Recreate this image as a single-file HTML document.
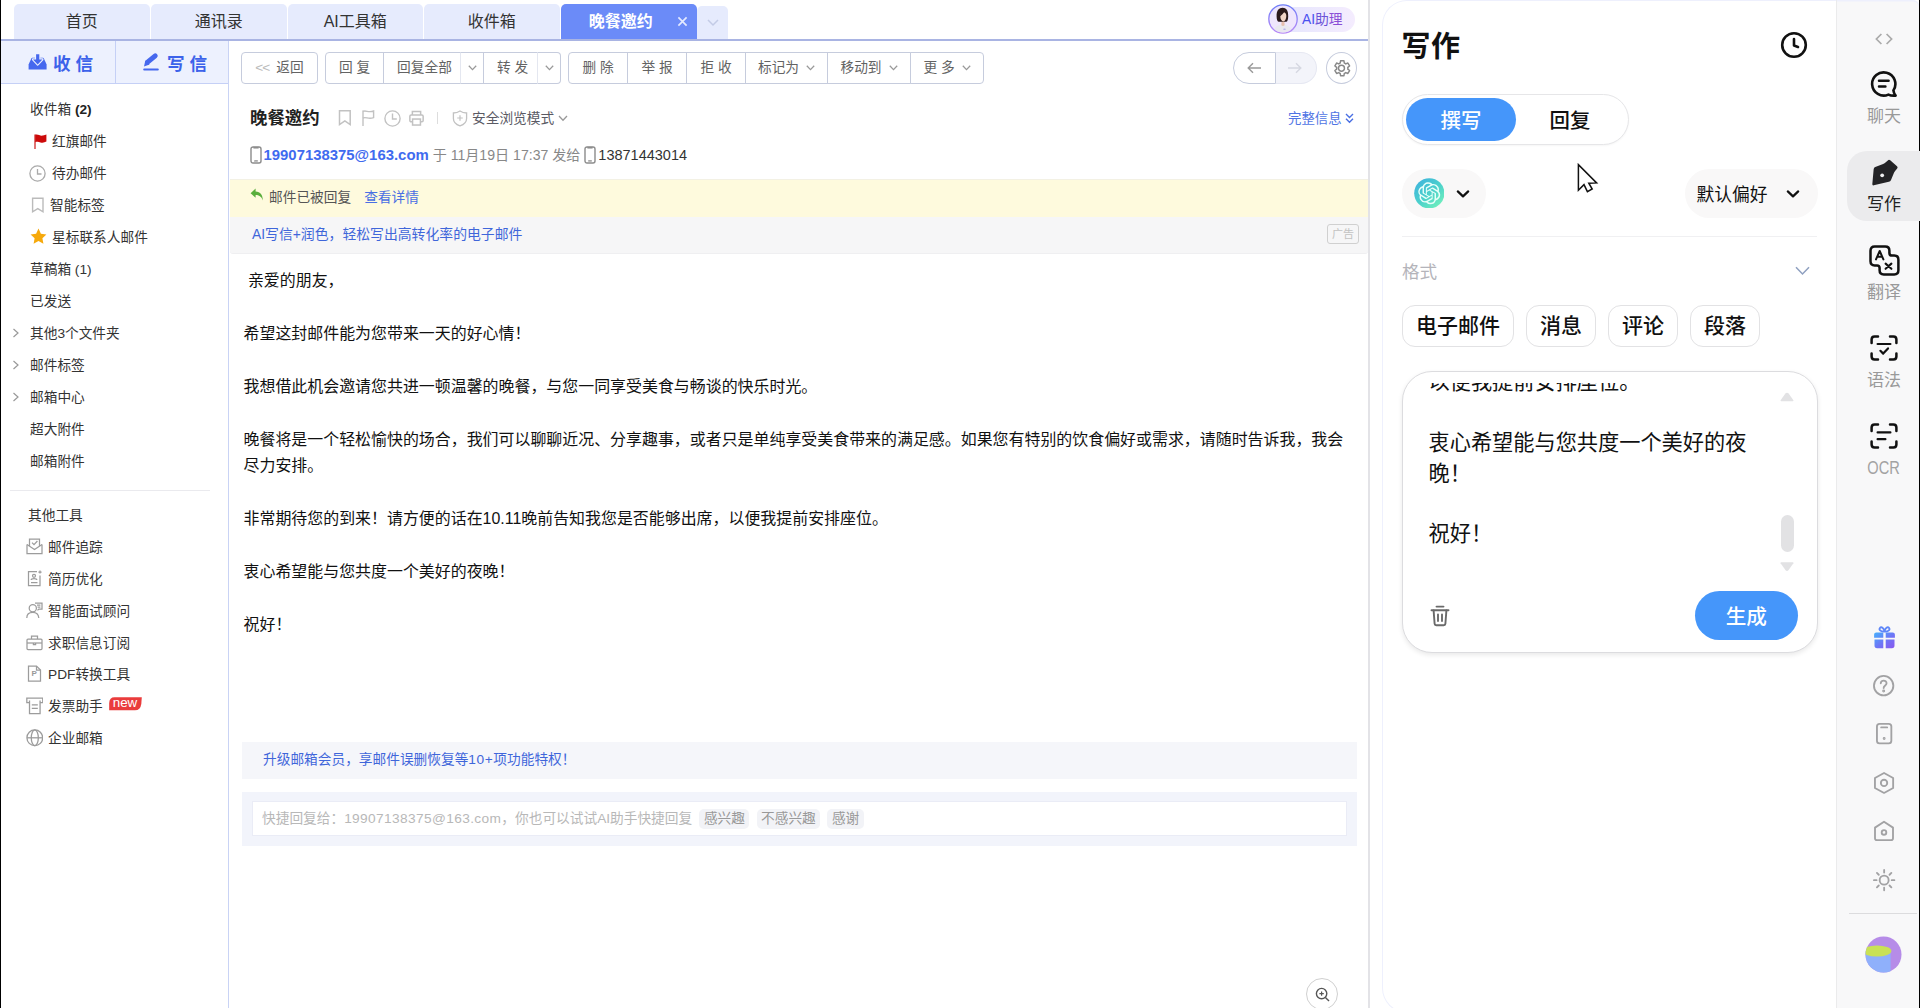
<!DOCTYPE html>
<html lang="zh-CN">
<head>
<meta charset="utf-8">
<title>晚餐邀约</title>
<style>
*{box-sizing:border-box;margin:0;padding:0}
html,body{width:1920px;height:1008px;overflow:hidden;background:#fff}
body{font-family:"Liberation Sans","Noto Sans CJK SC",sans-serif;font-size:13.7px;color:#333;position:relative}
.abs{position:absolute}
#edge{left:0;top:0;width:1px;height:1008px;background:#000}
/* tabs */
.tab{position:absolute;top:4px;height:35px;width:135.5px;background:#e6ebfd;border-radius:5px 5px 0 0;text-align:center;line-height:35px;font-size:16px;color:#333}
.tab.on{background:#6b8bf8;color:#fff;font-weight:bold;line-height:36px}
#tabline{left:1px;top:39px;width:1368px;height:2px;background:#a9b4e3}
/* sidebar */
#side{left:1px;top:41px;width:228px;height:967px;border-right:1px solid #c9d3f5;background:#fff}
#sbtn{left:0;top:0;width:227px;height:43px;background:#edf1fe;border-bottom:1px solid #c5d0f6}
.sb{position:absolute;top:0;height:42px;line-height:46px;font-size:17.6px;font-weight:bold;color:#3c62ea;white-space:nowrap}
.mi{position:absolute;left:0;height:20px;line-height:22px;white-space:nowrap;color:#333}
.mi svg{position:absolute}
/* main */
#main{left:230px;top:41px;width:1138px;height:967px;background:#fff}
.btn{position:absolute;top:11px;height:32px;border:1px solid #c6ccdd;background:#fff;color:#636363;text-align:center;line-height:30px;white-space:nowrap}

#vline{left:1368.4px;top:0;width:1.7px;height:1008px;background:#e3e3e7}
#panel{left:1382px;top:0;width:455px;height:1013px;border:1.6px solid #eef0fd;border-right:none;border-radius:25px 0 0 25px;background:#fff}
#rail{left:1836px;top:0;width:82.7px;height:1013px;background:#f8f8f9;border-left:1px solid #ebebec;box-shadow:inset 0 1.6px 0 #eef0fd;border-radius:0 6px 0 0}
#redge{left:1918.7px;top:0;width:1.3px;height:1008px;background:#000}
.rl{position:absolute;left:0;width:94px;text-align:center;font-size:17px;color:#999;height:24px;line-height:24px}
.chip{position:absolute;top:304.5px;height:42.5px;border:1px solid #e2e2e4;border-radius:13px;font-size:21px;font-weight:500;color:#111;text-align:center;line-height:39.6px;background:#fff}
</style>
</head>
<body>
<div id="edge" class="abs"></div>

<!-- TABS -->
<div class="tab" style="left:14px">首页</div>
<div class="tab" style="left:151px">通讯录</div>
<div class="tab" style="left:287.5px">AI工具箱</div>
<div class="tab" style="left:424px">收件箱</div>
<div class="tab on" style="left:561px"><span style="position:relative;left:-8px">晚餐邀约</span>
  <svg class="abs" style="left:116px;top:12px" width="11" height="11" viewBox="0 0 11 11"><path d="M1.4 1.4 L9.6 9.6 M9.6 1.4 L1.4 9.6" stroke="#e4eaff" stroke-width="1.7" fill="none"/></svg>
</div>
<div class="abs" style="left:697.3px;top:6px;width:31px;height:33px;background:#e6ebfd;border-radius:5px 5px 0 0">
  <svg class="abs" style="left:9.5px;top:13px" width="12" height="8" viewBox="0 0 12 8"><path d="M1 1 L6 6 L11 1" stroke="#c3cbe6" stroke-width="1.5" fill="none"/></svg>
</div>

<!-- AI assistant pill -->
<div class="abs" style="left:1283px;top:7px;width:72px;height:25px;border-radius:0 13px 13px 0;background:linear-gradient(90deg,#e6e6fd,#f4ecfe)"></div>
<div class="abs" style="left:1302px;top:7px;height:25px;line-height:25px;font-size:13.8px;color:#6a4fe0;white-space:nowrap"><span style="color:#4a50f0">AI</span><span style="color:#6b52d8">助</span><span style="color:#8a4fd6">理</span></div>
<svg class="abs" style="left:1268px;top:4px" width="30" height="30" viewBox="0 0 30 30">
  <defs><linearGradient id="avg" x1="0" y1="0" x2="0" y2="1"><stop offset="0" stop-color="#6c7cf8"/><stop offset="1" stop-color="#b98af6"/></linearGradient>
  <clipPath id="avc"><circle cx="15" cy="15" r="13.6"/></clipPath></defs>
  <circle cx="15" cy="15" r="14.2" fill="#efe6fc" stroke="url(#avg)" stroke-width="1.3"/>
  <g clip-path="url(#avc)">
    <path d="M5.6 30 C5.8 22.6 9.6 20.6 14.8 20.6 C20 20.6 23.2 22.6 23.6 30 Z" fill="#e9e8ef"/>
    <path d="M13.6 16.5 L16.4 16.5 L16.6 21.2 Q15 22.6 13.4 21.2 Z" fill="#e6bfae"/>
    <path d="M8.6 12.4 C8.4 6.4 11 3.7 14.6 3.7 C18.2 3.7 20.4 6.4 20.2 12.4 C20.1 15.4 19.6 17 18.4 17.8 L10.6 17.8 C9.2 17 8.7 15.4 8.6 12.4 Z" fill="#2b1a1b"/>
    <path d="M12.3 11 C12.8 9 14.4 8.2 15.6 8.2 C17 8.2 18.3 9.4 18.3 12 C18.3 15 17 17.4 15.3 17.4 C13.6 17.4 12.3 15 12.3 12.6 Z" fill="#f0d3c6"/>
    <path d="M11.8 12.4 C12 9.4 13.6 7.4 16.4 7.6 C15.6 9.4 14 10.8 11.8 12.4 Z" fill="#2b1a1b"/>
    <rect x="15.4" y="24.4" width="2.2" height="1.5" rx="0.5" fill="#b9b4ee"/>
  </g>
</svg>
<div id="tabline" class="abs"></div>

<div id="side" class="abs">
<div id="sbtn" class="abs"><div class="abs" style="left:114px;top:0;width:1px;height:42px;background:#c5d0f6"></div><svg class="abs" style="left:26.5px;top:11px" width="20" height="19" viewBox="0 0 20 19"><path d="M0.6 17.4 L0.6 12.4 L3.4 6.2 Q3.6 5.8 4.2 5.8 L15 5.8 Q15.6 5.8 15.8 6.2 L18.6 12.4 L18.6 17.4 Z" fill="#4668ee"/><path d="M8.1 2.2 L11.3 2.2 L11.3 7.4 L14.4 7.4 L9.7 12.6 L5 7.4 L8.1 7.4 Z" fill="#4668ee" stroke="#edf1fe" stroke-width="2.2" stroke-linejoin="round"/><path d="M8.1 2.2 L11.3 2.2 L11.3 7.4 L14.4 7.4 L9.7 12.6 L5 7.4 L8.1 7.4 Z" fill="#4668ee"/></svg><div class="sb" style="left:52px">收 信</div><svg class="abs" style="left:141px;top:11px" width="19" height="20" viewBox="0 0 19 20"><path d="M5.6 10.2 L13.2 3.8" stroke="#4668ee" stroke-width="5" stroke-linecap="round" fill="none"/><path d="M2 14.4 L3.4 8.2 L7.6 12.4 Z" fill="#4668ee"/><rect x="1.2" y="16.5" width="15.6" height="2" rx="1" fill="#4668ee"/></svg><div class="sb" style="left:166px">写 信</div></div>
<div class="mi" style="top:58px;left:29px">收件箱 <b style="color:#222">(2)</b></div>
<div class="mi" style="top:90px;left:51px"><svg style="left:-18px;top:3px" width="13" height="15" viewBox="0 0 13 15"><path d="M1 0.6 L1 15" stroke="#d23a3a" stroke-width="1.4"/><path d="M1.2 0.8 C4 -0.2 6 2.4 9 1.6 C10.5 1.2 11.5 0.8 12.4 0.4 L12.4 7.6 C10.5 8.6 8.5 9.2 6.5 8.4 C4.5 7.6 3 7.4 1.2 8.2 Z" fill="#cc0a0a"/></svg>红旗邮件</div>
<div class="mi" style="top:122px;left:51px"><svg style="left:-23px;top:2px" width="17" height="17" viewBox="0 0 17 17"><circle cx="8.5" cy="8.5" r="7.6" fill="none" stroke="#aaa" stroke-width="1.3"/><path d="M8.5 4 L8.5 9 L12.5 9" fill="none" stroke="#aaa" stroke-width="1.3"/></svg>待办邮件</div>
<div class="mi" style="top:154px;left:49px"><svg style="left:-19px;top:2px" width="14" height="17" viewBox="0 0 14 17"><path d="M1.6 1.2 L12 1.2 L12 14.8 L6.8 11.6 L1.6 14.8 Z" fill="none" stroke="#bbb" stroke-width="1.4"/></svg>智能标签</div>
<div class="mi" style="top:186px;left:51px"><svg style="left:-22px;top:1px" width="17" height="17" viewBox="0 0 17 17"><path d="M8.5 0.6 L10.9 5.7 L16.4 6.4 L12.4 10.2 L13.4 15.8 L8.5 13.1 L3.6 15.8 L4.6 10.2 L0.6 6.4 L6.1 5.7 Z" fill="#f6a90c"/></svg>星标联系人邮件</div>
<div class="mi" style="top:218px;left:29px">草稿箱 (1)</div>
<div class="mi" style="top:250px;left:29px">已发送</div>
<div class="mi" style="top:282px;left:29px"><svg style="left:-18px;top:5px" width="8" height="10" viewBox="0 0 8 10"><path d="M1.5 1 L6 5 L1.5 9" fill="none" stroke="#999" stroke-width="1.2"/></svg>其他3个文件夹</div>
<div class="mi" style="top:314px;left:29px"><svg style="left:-18px;top:5px" width="8" height="10" viewBox="0 0 8 10"><path d="M1.5 1 L6 5 L1.5 9" fill="none" stroke="#999" stroke-width="1.2"/></svg>邮件标签</div>
<div class="mi" style="top:346px;left:29px"><svg style="left:-18px;top:5px" width="8" height="10" viewBox="0 0 8 10"><path d="M1.5 1 L6 5 L1.5 9" fill="none" stroke="#999" stroke-width="1.2"/></svg>邮箱中心</div>
<div class="mi" style="top:378px;left:29px">超大附件</div>
<div class="mi" style="top:410px;left:29px">邮箱附件</div>
<div class="abs" style="left:9px;top:449px;width:200px;height:1px;background:#eaeaee"></div>
<div class="mi" style="top:464px;left:27px">其他工具</div>
<div class="mi" style="top:496.00px;left:47px"><svg style="left:-22px;top:1px" width="17" height="17" viewBox="0 0 17 17" fill="none" stroke="#9c9c9c" stroke-width="1.25"><path d="M1 6.5 L1 15.5 L16 15.5 L16 6.5"/><path d="M1 6.5 L8.5 11.5 L16 6.5"/><path d="M3.5 8 L3.5 1 L13.5 1 L13.5 8"/><path d="M6 4.6 L8 6.6 L11.4 3"/></svg>邮件追踪</div>
<div class="mi" style="top:527.85px;left:47px"><svg style="left:-22px;top:1px" width="17" height="17" viewBox="0 0 17 17" fill="none" stroke="#9c9c9c" stroke-width="1.25"><path d="M11 1.5 L2.5 1.5 L2.5 15.5 L14 15.5 L14 5.5"/><circle cx="8" cy="5.8" r="1.5"/><path d="M5.2 10 C5.2 8.2 10.8 8.2 10.8 10"/><path d="M5 12.6 L11.5 12.6"/><path d="M14 0.4 L14 3.6 M12.4 2 L15.6 2"/></svg>简历优化</div>
<div class="mi" style="top:559.70px;left:47px"><svg style="left:-22px;top:1px" width="17" height="17" viewBox="0 0 17 17" fill="none" stroke="#9c9c9c" stroke-width="1.25"><circle cx="6.8" cy="6.2" r="3.6"/><path d="M0.8 16 C0.8 11.5 4 10.4 6.8 10.4 C9.6 10.4 12.4 11.5 12.8 16"/><path d="M9 1.2 L16 1.2 L16 7 L12.8 7 L11.5 8.4"/><path d="M11 3.2 L14.4 3.2 M11.6 5 L14.4 5"/></svg>智能面试顾问</div>
<div class="mi" style="top:591.55px;left:47px"><svg style="left:-22px;top:1px" width="17" height="17" viewBox="0 0 17 17" fill="none" stroke="#9c9c9c" stroke-width="1.25"><rect x="1" y="5" width="15" height="10.5" rx="1"/><path d="M5.5 5 L5.5 2 L11.5 2 L11.5 5"/><path d="M1 9 L16 9"/><path d="M7.4 9 L7.4 10.6 L9.6 10.6 L9.6 9"/></svg>求职信息订阅</div>
<div class="mi" style="top:623.40px;left:47px"><svg style="left:-22px;top:1px" width="17" height="17" viewBox="0 0 17 17" fill="none" stroke="#9c9c9c" stroke-width="1.25"><path d="M2.5 1 L10.5 1 L14.5 5 L14.5 16 L2.5 16 Z"/><path d="M10.5 1 L10.5 5 L14.5 5"/></svg><span style="position:absolute;left:-16.5px;top:2.6px;font-size:8px;font-weight:bold;color:#999;line-height:14px">P</span>PDF转换工具</div>
<div class="mi" style="top:655.10px;left:47px"><svg style="left:-22.3px;top:1.4px" width="17.6" height="17.6" viewBox="0 0 17 17" fill="none" stroke="#9c9c9c" stroke-width="1.25"><path d="M3.4 5.5 L0.8 5.5 L0.8 1 L16.2 1 L16.2 5.5 L13.6 5.5"/><path d="M3.4 3.5 L3.4 16 L13.6 16 L13.6 3.5"/><path d="M5.6 7.6 L11.4 7.6 M5.6 11 L11.4 11"/></svg>发票助手<svg style="left:61px;top:0.6px" width="33" height="14" viewBox="0 0 33 14"><path d="M5.5 0.2 L32.8 0.2 L32.3 7 Q31.4 13.3 26 13.3 L0.2 13.3 L0.2 6 Q0.4 0.2 5.5 0.2 Z" fill="#ea3c3c"/></svg><span style="position:absolute;left:61px;top:0.6px;width:32px;height:13.4px;color:#fff;font-size:13.4px;line-height:11.6px;text-align:center">new</span></div>
<div class="mi" style="top:687.00px;left:47px"><svg style="left:-22.3px;top:1.4px" width="17.6" height="17.6" viewBox="0 0 17 17" fill="none" stroke="#9c9c9c" stroke-width="1.25"><circle cx="8.5" cy="8.5" r="7.6"/><ellipse cx="8.5" cy="8.5" rx="3.4" ry="7.6"/><path d="M1 8.5 L16 8.5"/></svg>企业邮箱</div>
</div>
<div id="main" class="abs">
<div class="btn" style="left:11px;width:77px;border-radius:4px"><span style="color:#bbb;letter-spacing:-1px;margin-right:7px">&lt;&lt;</span>返回</div>
<div class="btn" style="left:95px;width:59px;border-radius:4px 0 0 4px">回 复</div>
<div class="btn" style="left:153px;width:78px;border-right-color:#e4e7f0"><span style="position:relative;left:2.5px">回复全部</span></div>
<div class="btn" style="left:230px;width:24px;border-left-color:#e4e7f0"><svg width="9" height="6" viewBox="0 0 9 6" style="vertical-align:1px"><path d="M0.8 0.8 L4.5 4.6 L8.2 0.8" fill="none" stroke="#999" stroke-width="1.3"/></svg></div>
<div class="btn" style="left:253px;width:55px;border-right-color:#e4e7f0"><span style="position:relative;left:2px">转 发</span></div>
<div class="btn" style="left:307px;width:24px;border-radius:0 4px 4px 0;border-left-color:#e4e7f0"><svg width="9" height="6" viewBox="0 0 9 6" style="vertical-align:1px"><path d="M0.8 0.8 L4.5 4.6 L8.2 0.8" fill="none" stroke="#999" stroke-width="1.3"/></svg></div>
<div class="btn" style="left:338px;width:60px;border-radius:4px 0 0 4px">删 除</div>
<div class="btn" style="left:397px;width:60px;">举 报</div>
<div class="btn" style="left:456px;width:60px;">拒 收</div>
<div class="btn" style="left:515px;width:83px;">标记为<svg width="9" height="6" viewBox="0 0 9 6" style="vertical-align:1px;margin-left:7px"><path d="M0.8 0.8 L4.5 4.6 L8.2 0.8" fill="none" stroke="#999" stroke-width="1.3"/></svg></div>
<div class="btn" style="left:597px;width:84px;">移动到<svg width="9" height="6" viewBox="0 0 9 6" style="vertical-align:1px;margin-left:7px"><path d="M0.8 0.8 L4.5 4.6 L8.2 0.8" fill="none" stroke="#999" stroke-width="1.3"/></svg></div>
<div class="btn" style="left:680px;width:74px;border-radius:0 4px 4px 0">更 多<svg width="9" height="6" viewBox="0 0 9 6" style="vertical-align:1px;margin-left:7px"><path d="M0.8 0.8 L4.5 4.6 L8.2 0.8" fill="none" stroke="#999" stroke-width="1.3"/></svg></div>
<div class="abs" style="left:1003px;top:11px;width:43px;height:32px;border:1px solid #c6ccdd;border-radius:16px 0 0 16px;background:#fff"><svg class="abs" style="left:13px;top:9px" width="15" height="12" viewBox="0 0 15 12"><path d="M14 6 L1.5 6 M6 1.2 L1.2 6 L6 10.8" fill="none" stroke="#999" stroke-width="1.4"/></svg></div>
<div class="abs" style="left:1045.5px;top:11px;width:41.5px;height:32px;border:1px solid #e6e8f2;border-left:none;border-radius:0 16px 16px 0;background:#f3f4fa"><svg class="abs" style="left:11px;top:9px" width="15" height="12" viewBox="0 0 15 12"><path d="M1 6 L13.5 6 M9 1.2 L13.8 6 L9 10.8" fill="none" stroke="#d6d8e2" stroke-width="1.4"/></svg></div>
<div class="abs" style="left:1096px;top:11px;width:31px;height:32px;border:1px solid #c6ccdd;border-radius:50%;background:#fff"><svg class="abs" style="left:4.6px;top:5px" width="20.5" height="20.5" viewBox="0 0 24 24"><path d="M12 15.5 A3.5 3.5 0 1 0 12 8.5 A3.5 3.5 0 0 0 12 15.5 Z M19.4 13 C19.45 12.7 19.5 12.35 19.5 12 C19.5 11.65 19.45 11.3 19.4 11 L21.5 9.35 L19.5 5.9 L17 6.9 C16.5 6.5 15.9 6.15 15.3 5.9 L14.9 3.25 L10.9 3.25 L10.5 5.9 C9.9 6.15 9.35 6.5 8.8 6.9 L6.3 5.9 L4.3 9.35 L6.4 11 C6.35 11.3 6.3 11.65 6.3 12 C6.3 12.35 6.35 12.7 6.4 13 L4.3 14.65 L6.3 18.1 L8.8 17.1 C9.3 17.5 9.9 17.85 10.5 18.1 L10.9 20.75 L14.9 20.75 L15.3 18.1 C15.9 17.85 16.5 17.5 17 17.1 L19.5 18.1 L21.5 14.65 Z" transform="translate(-0.9,0)" fill="none" stroke="#888" stroke-width="1.7" stroke-linejoin="round"/></svg></div>
<div class="abs" style="left:20px;top:63.5px;height:26px;line-height:27px;font-size:17.4px;font-weight:bold;color:#222;white-space:nowrap">晚餐邀约</div>
<svg class="abs" style="left:108px;top:68px" width="14" height="18" viewBox="0 0 14 18" fill="none" stroke="#c2c2c2" stroke-width="1.5"><path d="M1.5 1.8 L12.2 1.8 L12.2 15.6 L6.85 12 L1.5 15.6 Z"/></svg>
<svg class="abs" style="left:131px;top:68px" width="15" height="18" viewBox="0 0 15 18" fill="none" stroke="#c2c2c2" stroke-width="1.4"><path d="M2 1.5 L2 17"/><path d="M2 2.4 C5 1 7.5 4 12.6 2 L12.6 8.6 C7.5 10.6 5 7.6 2 9"/></svg>
<svg class="abs" style="left:154px;top:68.5px" width="17" height="17" viewBox="0 0 17 17" fill="none" stroke="#c2c2c2" stroke-width="1.4"><circle cx="8.5" cy="8.5" r="7.6"/><path d="M8.5 3.6 L8.5 9 L12.8 9"/></svg>
<svg class="abs" style="left:178.5px;top:68.5px" width="15" height="16.4" viewBox="0 0 16 17" fill="none" stroke="#c2c2c2" stroke-width="1.6"><path d="M3.6 5 L3.6 1.4 L12.4 1.4 L12.4 5"/><rect x="0.9" y="5" width="14.2" height="7.4" rx="1.4"/><rect x="3.8" y="9.4" width="8.4" height="6.4" fill="#fff"/></svg>
<div class="abs" style="left:207px;top:70.5px;width:1px;height:12px;background:#ddd"></div>
<svg class="abs" style="left:221.5px;top:69px" width="16" height="17" viewBox="0 0 16 17" fill="none" stroke="#c2c2c2" stroke-width="1.3"><path d="M8 1 C10 2.4 12.4 3 14.6 3 L14.6 8.4 C14.6 12 11.6 14.6 8 15.8 C4.4 14.6 1.4 12 1.4 8.4 L1.4 3 C3.6 3 6 2.4 8 1 Z"/><path d="M5.2 8 L10.8 8 M8 5.2 L8 10.8" stroke-width="1.2"/></svg>
<div class="abs" style="left:242px;top:67px;height:22px;line-height:22px;color:#5a5a64;white-space:nowrap">安全浏览模式<svg width="10" height="7" viewBox="0 0 10 7" style="vertical-align:1px;margin-left:4px"><path d="M1 1 L5 5.2 L9 1" fill="none" stroke="#999" stroke-width="1.3"/></svg></div>
<div class="abs" style="left:1058px;top:66.5px;height:22px;line-height:22px;color:#4f74e4;font-size:13.4px;white-space:nowrap">完整信息<svg width="9" height="11" viewBox="0 0 9 11" style="vertical-align:-1px;margin-left:3px"><path d="M1 1 L4.5 4.4 L8 1 M1 5.8 L4.5 9.2 L8 5.8" fill="none" stroke="#4a6fe3" stroke-width="1.4"/></svg></div>
<div class="abs" style="left:19.5px;top:102px;height:24px;line-height:24px;font-size:14.1px;color:#888;white-space:nowrap"><svg width="12" height="18" viewBox="0 0 12 18" style="vertical-align:-4px" fill="none" stroke="#8c8c8c" stroke-width="1.4"><rect x="1" y="1" width="10" height="16" rx="2"/><path d="M3.4 1.7 L8.6 1.7" stroke-width="1.7"/><path d="M4.2 14.9 L7.8 14.9" stroke-width="1.5" stroke="#9a9a9a"/></svg><b style="color:#3f6bef;margin-left:2px;font-size:14.9px">19907138375@163.com</b> 于 11月19日 17:37 发给 <svg width="12" height="18" viewBox="0 0 12 18" style="vertical-align:-4px" fill="none" stroke="#8c8c8c" stroke-width="1.4"><rect x="1" y="1" width="10" height="16" rx="2"/><path d="M3.4 1.7 L8.6 1.7" stroke-width="1.7"/><path d="M4.2 14.9 L7.8 14.9" stroke-width="1.5" stroke="#9a9a9a"/></svg><span style="color:#333;margin-left:2px;font-size:14.5px">13871443014</span></div>
<div class="abs" style="left:0;top:137.5px;width:1138px;height:38px;background:#fefadd;border-top:1px solid #f3f1e4"></div>
<svg class="abs" style="left:20px;top:147px" width="14" height="13" viewBox="0 0 14 13"><path d="M5.6 0.6 L0.6 5.2 L5.6 9.8 L5.6 7 C9 7 11.4 8.4 12.8 12.4 C12.8 7 10.4 3.6 5.6 3.4 Z" fill="#5aae3c"/></svg>
<div class="abs" style="left:39px;top:146.3px;height:22px;line-height:22px;color:#555;white-space:nowrap">邮件已被回复<span style="color:#4a6fe3;margin-left:13px">查看详情</span></div>
<div class="abs" style="left:0;top:175.5px;width:1138px;height:37.4px;background:#f6f6f7;border-bottom:1px solid #efeff1;border-radius:0 0 3px 3px"></div>
<div class="abs" style="left:22px;top:181.6px;height:22px;line-height:22px;color:#3f66da;font-size:13.85px;white-space:nowrap">AI写信+润色，轻松写出高转化率的电子邮件</div>
<div class="abs" style="left:1097px;top:183px;width:32px;height:20.4px;border:1.3px solid #d0d0d0;border-radius:3px;color:#c2c2c2;font-size:11px;line-height:18.4px;text-align:center">广告</div>
<div class="abs" style="left:13.5px;top:226.8px;width:1120px;font-size:15.95px;line-height:26.45px;color:#111;white-space:pre"> 亲爱的朋友，<br><br>希望这封邮件能为您带来一天的好心情！<br><br>我想借此机会邀请您共进一顿温馨的晚餐，与您一同享受美食与畅谈的快乐时光。<br><br>晚餐将是一个轻松愉快的场合，我们可以聊聊近况、分享趣事，或者只是单纯享受美食带来的满足感。如果您有特别的饮食偏好或需求，请随时告诉我，我会<br>尽力安排。<br><br>非常期待您的到来！请方便的话在10.11晚前告知我您是否能够出席，以便我提前安排座位。<br><br>衷心希望能与您共度一个美好的夜晚！<br><br>祝好！</div>
<div class="abs" style="left:11.5px;top:700.5px;width:1115.5px;height:37px;background:#f5f6fa"></div>
<div class="abs" style="left:33px;top:708px;height:22px;line-height:22px;color:#3f66da;white-space:nowrap">升级邮箱会员，享邮件误删恢复等<span style="letter-spacing:0.6px">10+</span>项功能特权！</div>
<div class="abs" style="left:11.5px;top:750.5px;width:1115.5px;height:54.5px;background:#f2f4fb"></div>
<div class="abs" style="left:22px;top:760px;width:1094.5px;height:35px;background:#fff;border:1px solid #eaecf6"></div>
<div class="abs" style="left:32px;top:766.5px;height:22px;line-height:22px;color:#b8b8b8;white-space:nowrap">快捷回复给：<span style="letter-spacing:0.37px">19907138375@163.com</span>，你也可以试试AI助手快捷回复<span style="display:inline-block;height:20.5px;line-height:20.5px;padding:0 4.4px;margin-left:7.3px;background:#f2f3f7;color:#999;border-radius:5px;font-size:13.7px;vertical-align:0">感兴趣</span><span style="display:inline-block;height:20.5px;line-height:20.5px;padding:0 4.4px;margin-left:7.3px;background:#f2f3f7;color:#999;border-radius:5px;font-size:13.7px;vertical-align:0">不感兴趣</span><span style="display:inline-block;height:20.5px;line-height:20.5px;padding:0 4.4px;margin-left:7.3px;background:#f2f3f7;color:#999;border-radius:5px;font-size:13.7px;vertical-align:0">感谢</span></div>
<div class="abs" style="left:1076px;top:937px;width:32px;height:32px;border:1px solid #d0d0d0;border-radius:50%;background:#fff"><svg class="abs" style="left:8px;top:8px" width="15" height="15" viewBox="0 0 15 15" fill="none" stroke="#555" stroke-width="1.4"><circle cx="6.6" cy="6.6" r="5.2"/><path d="M10.4 10.4 L14 14"/><path d="M4.4 6.6 L8.8 6.6 M6.6 4.4 L6.6 8.8" stroke-width="1.2"/></svg></div>

</div>
<div id="vline" class="abs"></div>
<div id="panel" class="abs">
<div class="abs" style="left:18.6px;top:25.6px;font-size:29px;font-weight:bold;color:#111;line-height:40px;letter-spacing:0.5px">写作</div>
<svg class="abs" style="left:396.5px;top:29.5px" width="28" height="28" viewBox="0 0 28 28" fill="none" stroke="#111" stroke-width="2.6" stroke-linecap="round" stroke-linejoin="round"><circle cx="14" cy="14" r="11.8"/><path d="M14 8 L14 14.6 L18 16"/></svg>
<div class="abs" style="left:19px;top:93px;width:227px;height:51px;border:1px solid #e6e6e8;border-radius:26px;background:#fff;box-shadow:0 1px 2px rgba(0,0,0,0.04)"></div>
<div class="abs" style="left:23px;top:97px;width:110px;height:43px;border-radius:22px;background:#4596fa;color:#fff;font-size:20.4px;font-weight:500;text-align:center;line-height:46px">撰写</div>
<div class="abs" style="left:133px;top:97px;width:108px;height:43px;color:#111;font-size:20.4px;font-weight:500;text-align:center;line-height:46px">回复</div>
<div class="abs" style="left:19px;top:168.2px;width:84px;height:48.8px;border-radius:24.4px;background:#f9f8f8"></div>
<svg class="abs" style="left:30.8px;top:176.9px" width="30.6" height="30.6" viewBox="0 0 31 31"><defs><linearGradient id="gg" x1="0.1" y1="0.1" x2="0.85" y2="0.95"><stop offset="0" stop-color="#40b6dc"/><stop offset="0.5" stop-color="#4cd0cc"/><stop offset="1" stop-color="#70f0bc"/></linearGradient></defs><circle cx="15.5" cy="15.5" r="15.3" fill="url(#gg)"/><path d="M22.2819 9.8211a5.9847 5.9847 0 0 0-.5157-4.9108 6.0462 6.0462 0 0 0-6.5098-2.9A6.0651 6.0651 0 0 0 4.9807 4.1818a5.9847 5.9847 0 0 0-3.9977 2.9 6.0462 6.0462 0 0 0 .7427 7.0966 5.98 5.98 0 0 0 .511 4.9107 6.051 6.051 0 0 0 6.5146 2.9001A5.9847 5.9847 0 0 0 13.2599 24a6.0557 6.0557 0 0 0 5.7718-4.2058 5.9894 5.9894 0 0 0 3.9977-2.9001 6.0557 6.0557 0 0 0-.7475-7.0729zm-9.022 12.6081a4.4755 4.4755 0 0 1-2.8764-1.0408l.1419-.0804 4.7783-2.7582a.7948.7948 0 0 0 .3927-.6813v-6.7369l2.02 1.1686a.071.071 0 0 1 .038.052v5.5826a4.504 4.504 0 0 1-4.4945 4.4944zm-9.6607-4.1254a4.4708 4.4708 0 0 1-.5346-3.0137l.142.0852 4.783 2.7582a.7712.7712 0 0 0 .7806 0l5.8428-3.3685v2.3324a.0804.0804 0 0 1-.0332.0615L9.74 19.9502a4.4992 4.4992 0 0 1-6.1408-1.6464zM2.3408 7.8956a4.485 4.485 0 0 1 2.3655-1.9728V11.6a.7664.7664 0 0 0 .3879.6765l5.8144 3.3543-2.0201 1.1685a.0757.0757 0 0 1-.071 0l-4.8303-2.7865A4.504 4.504 0 0 1 2.3408 7.872zm16.5963 3.8558L13.1038 8.364 15.1192 7.2a.0757.0757 0 0 1 .071 0l4.8303 2.7913a4.4944 4.4944 0 0 1-.6765 8.1042v-5.6772a.79.79 0 0 0-.407-.667zm2.0107-3.0231l-.142-.0852-4.7735-2.7818a.7759.7759 0 0 0-.7854 0L9.409 9.2297V6.8974a.0662.0662 0 0 1 .0284-.0615l4.8303-2.7866a4.4992 4.4992 0 0 1 6.6802 4.66zM8.3065 12.863l-2.02-1.1638a.0804.0804 0 0 1-.038-.0567V6.0742a4.4992 4.4992 0 0 1 7.3757-3.4537l-.142.0805L8.704 5.459a.7948.7948 0 0 0-.3927.6813zm1.0976-2.3654l2.602-1.4998 2.6069 1.4998v2.9994l-2.5974 1.4997-2.6067-1.4997Z" transform="translate(4.3,4.3) scale(0.93)" fill="#e8fffa"/></svg>
<svg class="abs" style="left:72.5px;top:188px" width="14" height="9" viewBox="0 0 14 9"><path d="M1.8 2.4 L7 7.4 L12.2 2.4" fill="none" stroke="#111" stroke-width="2.2" stroke-linecap="round" stroke-linejoin="round"/></svg>
<div class="abs" style="left:301.5px;top:168.2px;width:133px;height:48.8px;border-radius:24.4px;background:#f9f8f8"></div>
<div class="abs" style="left:313.5px;top:179px;font-size:17.8px;color:#111;line-height:31px;white-space:nowrap">默认偏好</div>
<svg class="abs" style="left:403px;top:188px" width="14" height="9" viewBox="0 0 14 9"><path d="M1.8 2.4 L7 7.4 L12.2 2.4" fill="none" stroke="#111" stroke-width="2.2" stroke-linecap="round" stroke-linejoin="round"/></svg>
<div class="abs" style="left:19px;top:235px;width:415px;height:1px;background:#f0f0f2"></div>
<div class="abs" style="left:19px;top:257px;font-size:17.6px;color:#b4b4ba;line-height:28px">格式</div>
<svg class="abs" style="left:412px;top:265px" width="15" height="10" viewBox="0 0 15 10"><path d="M1 1.2 L7.5 8 L14 1.2" fill="none" stroke="#8fa0c0" stroke-width="1.5"/></svg>
<div class="chip" style="left:19px;top:303.5px;width:112px">电子邮件</div>
<div class="chip" style="left:143px;top:303.5px;width:70px">消息</div>
<div class="chip" style="left:225px;top:303.5px;width:70px">评论</div>
<div class="chip" style="left:307px;top:303.5px;width:70px">段落</div>
<div class="abs" style="left:19px;top:370px;width:416px;height:282px;border:1px solid #dcdcdf;border-radius:30px;background:#fff;box-shadow:0 2px 5px rgba(0,0,0,0.09);overflow:hidden"><div class="abs" style="left:0;top:11px;width:380px;height:190px;overflow:hidden"><div class="abs" style="left:25.5px;top:-76.5px;width:340px;font-size:21.2px;line-height:30.4px;color:#111;white-space:pre">非常期待您的到来！请方便的话在<br>10.11晚前告知我您是否能够出席，<br>以便我提前安排座位。<br><br>衷心希望能与您共度一个美好的夜<br>晚！<br><br>祝好！</div></div><svg class="abs" style="left:376px;top:19px" width="16" height="11.6" viewBox="0 0 14 10"><path d="M7 1.4 Q7.8 1.4 8.4 2.2 L12.6 8 Q13 9 12 9 L2 9 Q1 9 1.4 8 L5.6 2.2 Q6.2 1.4 7 1.4 Z" fill="#e2e2e4"/></svg><div class="abs" style="left:377.5px;top:143px;width:13px;height:37px;border-radius:6.5px;background:#e2e2e4"></div><svg class="abs" style="left:376px;top:189.4px" width="16" height="11.6" viewBox="0 0 14 10"><path d="M7 8.6 Q7.8 8.6 8.4 7.8 L12.6 2 Q13 1 12 1 L2 1 Q1 1 1.4 2 L5.6 7.8 Q6.2 8.6 7 8.6 Z" fill="#e2e2e4"/></svg><svg class="abs" style="left:27px;top:232.8px" width="20" height="22" viewBox="0 0 20 22" fill="none" stroke="#6a6a6a" stroke-width="1.9" stroke-linecap="round" stroke-linejoin="round"><path d="M6.5 1.6 L13.5 1.6"/><path d="M1.5 5.2 L18.5 5.2"/><path d="M3.6 5.4 L4.6 18.6 Q4.7 20.2 6.2 20.2 L13.8 20.2 Q15.3 20.2 15.4 18.6 L16.4 5.4"/><path d="M8 9.4 L8 16 M12 9.4 L12 16"/></svg><div class="abs" style="left:292px;top:219px;width:102.6px;height:49px;border-radius:25px;background:#4596fa;color:#fff;font-size:20.6px;font-weight:500;text-align:center;line-height:51px">生成</div></div>
<svg class="abs" style="left:194px;top:162px" width="24" height="32" viewBox="0 0 24 32"><path d="M1.4 1.6 L1.4 27.2 L7.0 21.6 L10.4 28.6 L15.2 26.0 L11.8 20.2 L19.6 19.9 Z" fill="#fff" stroke="#111" stroke-width="1.5" stroke-linejoin="miter"/></svg>
</div>
<div id="redge" class="abs"></div>
<div id="rail" class="abs">
<svg class="abs" style="left:38px;top:32.5px" width="18" height="12" viewBox="0 0 18 12" fill="none" stroke="#aaa" stroke-width="1.7"><path d="M6.4 1 L1.4 6 L6.4 11 M11.6 1 L16.6 6 L11.6 11"/></svg>
<svg class="abs" style="left:32px;top:70px" width="29" height="28" viewBox="0 0 29 28" fill="none" stroke="#111" stroke-width="2.6" stroke-linecap="round" stroke-linejoin="round"><path d="M24.4 20.4 A11.6 11.6 0 1 0 19.4 24.6 C21.4 25.6 24 25.8 26.6 25.6 C25.4 24 24.6 22.4 24.4 20.4 Z"/><path d="M10 10.8 L19.6 10.8 M10 16.6 L16.4 16.6" stroke-width="2.5"/></svg>
<div class="rl" style="top:104.5px">聊天</div>
<div class="abs" style="left:10px;top:151px;width:100px;height:69.5px;border-radius:20px;background:#ebebed"></div>
<svg class="abs" style="left:33px;top:157.5px" width="30" height="30" viewBox="0 0 30 30"><path d="M17.82 2.38 Q19.00 1.30 20.21 2.35 L26.99 8.25 Q28.20 9.30 27.18 10.53 L25.32 12.77 Q24.30 14.00 23.69 15.48 L21.01 22.02 Q20.40 23.50 18.84 23.86 L3.76 27.34 Q2.20 27.70 2.34 26.11 L3.66 11.29 Q3.80 9.70 5.28 9.10 L13.12 5.90 Q14.60 5.30 15.78 4.22 Z" fill="#232326"/><circle cx="12.16" cy="17.37" r="1.9" fill="#eeeef0"/></svg>
<div class="rl" style="top:193px;color:#222">写作</div>
<svg class="abs" style="left:31.5px;top:245px" width="31" height="31" viewBox="0 0 31 31" fill="none" stroke="#111" stroke-width="2.5" stroke-linecap="round" stroke-linejoin="round"><path d="M5.7 1.5 L16.2 1.5 Q20.4 1.5 20.4 5.7 L20.4 8.0 Q20.4 10.6 23.0 10.6 L25.2 10.6 Q29.4 10.6 29.4 14.8 L29.4 25.2 Q29.4 29.4 25.2 29.4 L14.8 29.4 Q10.6 29.4 10.6 25.2 L10.6 23.0 Q10.6 20.4 8.0 20.4 L5.7 20.4 Q1.5 20.4 1.5 16.2 L1.5 5.7 Q1.5 1.5 5.7 1.5 Z"/><path d="M7 14.4 L10.7 6 L14.4 14.4 M8.4 11.8 L13 11.8" stroke-width="2"/><path d="M16.6 18.6 L22.4 23.8 M22.4 18.6 L16.6 23.8" stroke-width="2.1"/></svg>
<div class="rl" style="top:280.5px">翻译</div>
<svg class="abs" style="left:33px;top:335px" width="28" height="26" viewBox="0 0 28 26" fill="none" stroke="#111" stroke-width="2.5" stroke-linecap="round" stroke-linejoin="round"><path d="M1.6 8 L1.6 4.6 Q1.6 1.6 4.6 1.6 L8 1.6 M20 1.6 L23.4 1.6 Q26.4 1.6 26.4 4.6 L26.4 8 M26.4 18.4 L26.4 21.4 Q26.4 24.4 23.4 24.4 L20 24.4 M8 24.4 L4.6 24.4 Q1.6 24.4 1.6 21.4 L1.6 18.4"/><path d="M7.6 9 L20.4 9" stroke-width="2.2"/><path d="M10.4 15.8 L13.2 18.6 L18 13.4" stroke-width="2.2"/></svg>
<div class="rl" style="top:368.5px">语法</div>
<svg class="abs" style="left:33px;top:423px" width="28" height="26" viewBox="0 0 28 26" fill="none" stroke="#111" stroke-width="2.5" stroke-linecap="round" stroke-linejoin="round"><path d="M1.6 8 L1.6 4.6 Q1.6 1.6 4.6 1.6 L8 1.6 M20 1.6 L23.4 1.6 Q26.4 1.6 26.4 4.6 L26.4 8 M26.4 18.4 L26.4 21.4 Q26.4 24.4 23.4 24.4 L20 24.4 M8 24.4 L4.6 24.4 Q1.6 24.4 1.6 21.4 L1.6 18.4"/><path d="M7.6 9.4 L20.4 9.4 M7.6 16.2 L15.4 16.2" stroke-width="2.2"/></svg>
<div class="rl" style="top:456px;font-size:17.6px"><span style="display:inline-block;transform:scaleX(0.83);color:#a2a2a2">OCR</span></div>
<svg class="abs" style="left:34.50px;top:623.60px" width="25.00" height="26.40" viewBox="-12.50 -13.20 25.00 26.40" fill="none" stroke="#a2a2a4" stroke-width="1.85" stroke-linecap="round" stroke-linejoin="round"><defs><linearGradient id="gf" x1="0" y1="0" x2="1" y2="1"><stop offset="0" stop-color="#45b0fc"/><stop offset="0.55" stop-color="#6f74f6"/><stop offset="1" stop-color="#8a58ee"/></linearGradient></defs><path d="M0 -5.6 C-3.4 -5.4 -6 -7.2 -4.6 -9.2 C-3.2 -11 -0.6 -9.2 0 -5.6 C0.6 -9.2 3.2 -11 4.6 -9.2 C6 -7.2 3.4 -5.4 0 -5.6 Z" fill="none" stroke="#5e86f8" stroke-width="1.8"/><path d="M-10.4 -2.6 Q-10.4 -4.8 -8.2 -4.8 L-1.2 -4.8 L-1.2 0.6 L-10.4 0.6 Z M1.2 -4.8 L8.2 -4.8 Q10.4 -4.8 10.4 -2.6 L10.4 0.6 L1.2 0.6 Z M-10 2.4 L-1.2 2.4 L-1.2 11 L-7.4 11 Q-10 11 -10 8.4 Z M1.2 2.4 L10 2.4 L10 8.4 Q10 11 7.4 11 L1.2 11 Z" fill="url(#gf)" stroke="none"/></svg>
<svg class="abs" style="left:34.15px;top:672.55px" width="25.30" height="25.30" viewBox="-12.65 -12.65 25.30 25.30" fill="none" stroke="#a2a2a4" stroke-width="1.85" stroke-linecap="round" stroke-linejoin="round"><circle cx="0" cy="0" r="9.7"/><path d="M-2.9 -2.4 C-2.9 -5.8 2.9 -5.8 2.9 -2.4 C2.9 -0.2 0 -0.2 0 2.4"/><circle cx="0" cy="5.4" r="0.55" fill="#a2a2a4"/></svg>
<svg class="abs" style="left:36.55px;top:721.45px" width="20.30" height="25.30" viewBox="-10.15 -12.65 20.30 25.30" fill="none" stroke="#a2a2a4" stroke-width="1.85" stroke-linecap="round" stroke-linejoin="round"><rect x="-7.2" y="-9.7" width="14.4" height="19.4" rx="2.6"/><path d="M-3 -6.2 L3 -6.2"/><circle cx="0" cy="4.9" r="0.5" fill="#a2a2a4"/></svg>
<svg class="abs" style="left:34.90px;top:769.55px" width="24.10" height="25.90" viewBox="-12.05 -12.95 24.10 25.90" fill="none" stroke="#a2a2a4" stroke-width="1.85" stroke-linecap="round" stroke-linejoin="round"><path d="M0 -10 L9.1 -5 L9.1 5 L0 10 L-9.1 5 L-9.1 -5 Z"/><circle cx="0" cy="0" r="3.2"/></svg>
<svg class="abs" style="left:34.95px;top:819.05px" width="24.00" height="24.00" viewBox="-12.00 -12.00 24.00 24.00" fill="none" stroke="#a2a2a4" stroke-width="1.85" stroke-linecap="round" stroke-linejoin="round"><path d="M0 -9.2 L9 -3.4 L9 7.2 Q9 9.1 7.1 9.1 L-7.1 9.1 Q-9 9.1 -9 7.2 L-9 -3.4 Z"/><circle cx="0" cy="1.4" r="2.3"/></svg>
<svg class="abs" style="left:33.60px;top:866.70px" width="26.30" height="26.30" viewBox="-13.15 -13.15 26.30 26.30" fill="none" stroke="#a2a2a4" stroke-width="1.85" stroke-linecap="round" stroke-linejoin="round"><circle cx="0" cy="0" r="4.5"/><path d="M0 -10.2 L0 -7.6" transform="rotate(0)"/><path d="M0 -10.2 L0 -7.6" transform="rotate(45)"/><path d="M0 -10.2 L0 -7.6" transform="rotate(90)"/><path d="M0 -10.2 L0 -7.6" transform="rotate(135)"/><path d="M0 -10.2 L0 -7.6" transform="rotate(180)"/><path d="M0 -10.2 L0 -7.6" transform="rotate(225)"/><path d="M0 -10.2 L0 -7.6" transform="rotate(270)"/><path d="M0 -10.2 L0 -7.6" transform="rotate(315)"/></svg>
<div class="abs" style="left:12px;top:913px;width:68px;height:1px;background:#dcdcde"></div>
<svg class="abs" style="left:28px;top:936.4px" width="37" height="37" viewBox="0 0 37 37"><defs><clipPath id="orb"><circle cx="18.5" cy="18.5" r="18"/></clipPath></defs><g clip-path="url(#orb)"><rect width="37" height="37" fill="#b68ce8"/><path d="M0 13 L25.6 13 L25.6 37 L0 37 Z" fill="#8fb0fb"/><ellipse cx="12" cy="15" rx="14.4" ry="5.6" fill="#c9e155"/></g></svg>
</div>
</body>
</html>
